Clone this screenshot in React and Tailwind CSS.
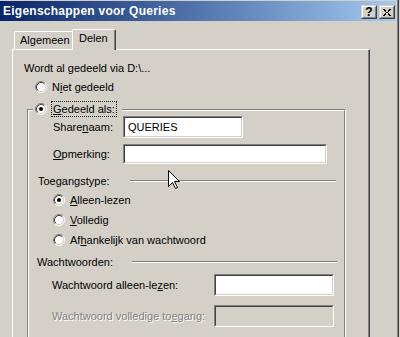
import React from "react";

function Radio({ checked }) {
  return (
    <svg width="12" height="12" viewBox="0 0 12 12" className="shrink-0">
      <circle cx="6" cy="6" r="4.5" fill="#ffffff" />
      <path d="M2.11 9.89 A5.5 5.5 0 0 1 9.89 2.11" stroke="#808080" fill="none" />
      <path d="M9.89 2.11 A5.5 5.5 0 0 1 2.11 9.89" stroke="#ffffff" fill="none" />
      <path d="M2.82 9.18 A4.5 4.5 0 0 1 9.18 2.82" stroke="#404040" fill="none" />
      <path d="M9.18 2.82 A4.5 4.5 0 0 1 2.82 9.18" stroke="#d4d0c8" fill="none" />
      {checked && <circle cx="6" cy="6" r="2" fill="#000000" />}
    </svg>
  );
}

function Edit({ className, disabled, children }) {
  return (
    <div className={"flex border border-t-[#808080] border-l-[#808080] border-b-white border-r-white " + className}>
      <div
        className={
          "flex-1 flex items-center pl-[3px] border border-t-[#404040] border-l-[#404040] border-b-[#d4d0c8] border-r-[#d4d0c8] " +
          (disabled ? "bg-[#d4d0c8]" : "bg-white")
        }
      >
        {children}
      </div>
    </div>
  );
}

function CapButton({ children }) {
  return (
    <div className="w-[16px] h-[14px] flex border border-t-[#d4d0c8] border-l-[#d4d0c8] border-b-[#404040] border-r-[#404040]">
      <div className="flex-1 flex items-center justify-center bg-[#d4d0c8] border border-t-white border-l-white border-b-[#808080] border-r-[#808080]">
        {children}
      </div>
    </div>
  );
}

function Sep() {
  return (
    <div className="flex-1 flex flex-col">
      <div className="h-[1px] bg-[#808080]" />
      <div className="h-[1px] bg-white" />
    </div>
  );
}

export default function App() {
  return (
    <div className="w-[400px] h-[337px] overflow-hidden bg-[#d4d0c8] flex relative font-['Liberation_Sans',Arial,sans-serif] text-[11px] leading-[13px] text-black whitespace-nowrap">
      <div className="w-[397px] flex flex-col">
        <div className="h-[1px]" />
        {/* Title bar */}
        <div className="h-[20px] mr-[1px] flex items-start bg-gradient-to-r from-[#0a246a] to-[#a6caf0]">
          <div className="pl-[3px] pt-[3px] text-white font-bold text-[12px] leading-[14px] tracking-[0.25px] flex-1">
            Eigenschappen voor Queries
          </div>
          <div className="flex gap-[2px] pt-[4px] pr-[1px]">
            <CapButton>
              <span className="font-bold text-[12px] leading-[10px] text-black">?</span>
            </CapButton>
            <CapButton>
              <svg width="8" height="7" viewBox="0 0 8 7" shapeRendering="crispEdges">
                <path d="M0 0h2v1h-2z M1 1h2v1h-2z M2 2h1v1h-1z M3 3h2v1h-2z M5 2h1v1h-1z M5 1h2v1h-2z M6 0h2v1h-2z M2 4h1v1h-1z M1 5h2v1h-2z M0 6h2v1h-2z M5 4h1v1h-1z M5 5h2v1h-2z M6 6h2v1h-2z" fill="#000" />
              </svg>
            </CapButton>
          </div>
        </div>

        {/* Tabs */}
        <div className="mt-[8px] h-[20px] flex items-start pl-[14px]">
          <div className="mt-[2px] w-[58px] h-[18px] rounded-tl-[2px] border-l border-t border-white pl-[5px] pt-[2px]">
            Algemeen
          </div>
          <div className="relative z-10 w-[44px] h-[21px] flex bg-[#d4d0c8] rounded-t-[2px] border-l border-t border-white border-r border-r-[#404040]">
            <div className="flex-1 border-r border-r-[#808080] pl-[6px] pt-[2px]">Delen</div>
          </div>
        </div>

        {/* Panel */}
        <div className="ml-[12px] w-[358px] flex-1 flex border-l border-t border-white border-r border-r-[#404040]">
          <div className="flex-1 flex flex-col border-r border-r-[#808080]">
            <div className="mt-[11px] pl-[11px] h-[14px] flex items-center">Wordt al gedeeld via D:\...</div>

            <div className="mt-[5px] pl-[22px] h-[14px] flex items-center gap-[5px]">
              <Radio />
              <span>
                N<span className="underline underline-offset-[1px]">i</span>et gedeeld
              </span>
            </div>

            {/* Group box */}
            <div className="mt-[15px] ml-[14px] w-[319px] flex-1 flex border-l border-t border-[#808080] border-r border-r-white">
              <div className="flex-1 flex flex-col border-l border-t border-white border-r border-r-[#808080]">
                <div className="-mt-[10px] -mb-[1px] ml-[4px] self-start h-[16px] flex items-center bg-[#d4d0c8] pl-[2px] pr-[5px] gap-[4px]">
                  <Radio checked />
                  <div className="h-[16px] flex items-center border border-dotted border-black px-[1px]">
                    <span>
                      <span className="underline underline-offset-[1px]">G</span>edeeld als:
                    </span>
                  </div>
                </div>

                <div className="pl-[24px] h-[22px] flex items-center">
                  <span className="w-[70px]">
                    Share<span className="underline underline-offset-[1px]">n</span>aam:
                  </span>
                  <Edit className="w-[120px] h-[22px]">QUERIES</Edit>
                </div>

                <div className="mt-[6px] pl-[24px] h-[20px] flex items-center">
                  <span className="w-[70px]">
                    <span className="underline underline-offset-[1px]">O</span>pmerking:
                  </span>
                  <Edit className="w-[204px] h-[20px]"></Edit>
                </div>

                <div className="mt-[10px] pl-[9px] pr-[8px] h-[14px] flex items-center">
                  <span className="w-[92px]">Toegangstype:</span>
                  <Sep />
                </div>

                <div className="mt-[5px] pl-[24px] h-[14px] flex items-center gap-[5px]">
                  <Radio checked />
                  <span>
                    <span className="underline underline-offset-[1px]">A</span>lleen-lezen
                  </span>
                </div>
                <div className="mt-[6px] pl-[24px] h-[14px] flex items-center gap-[5px]">
                  <Radio />
                  <span>
                    <span className="underline underline-offset-[1px]">V</span>olledig
                  </span>
                </div>
                <div className="mt-[6px] pl-[24px] h-[14px] flex items-center gap-[5px]">
                  <Radio />
                  <span>
                    Af<span className="underline underline-offset-[1px]">h</span>ankelijk van wachtwoord
                  </span>
                </div>

                <div className="mt-[8px] pl-[8px] pr-[7px] h-[14px] flex items-center">
                  <span className="w-[95px]">Wachtwoorden:</span>
                  <Sep />
                </div>

                <div className="mt-[5px] pl-[23px] h-[22px] flex items-center">
                  <span className="w-[162px]">
                    Wachtwoord alleen-le<span className="underline underline-offset-[1px]">z</span>en:
                  </span>
                  <Edit className="w-[120px] h-[22px]"></Edit>
                </div>

                <div className="mt-[9px] pl-[23px] h-[22px] flex items-center">
                  <span className="w-[162px] text-[#808080] [text-shadow:1px_1px_0_#ffffff]">
                    Wachtwoord volledige to<span className="underline underline-offset-[1px]">e</span>gang:
                  </span>
                  <Edit className="w-[120px] h-[22px]" disabled></Edit>
                </div>
              </div>
            </div>
          </div>
        </div>
      </div>
      <div className="w-[1px] bg-[#808080]" />
      <div className="w-[1px] bg-[#404040]" />
      <div className="w-[1px] bg-[#d4d0c8]" />

      <svg
        className="absolute left-[168px] top-[170px]"
        width="12"
        height="20"
        viewBox="0 0 12 20"
      >
        <path
          d="M0.5 0.5 L0.5 16.5 L4.5 12.5 L7.5 18.5 L9.5 17.5 L6.5 11.5 L11.5 11.5 Z"
          fill="#ffffff"
          stroke="#000000"
          strokeWidth="1"
          strokeLinejoin="miter"
        />
      </svg>
    </div>
  );
}
